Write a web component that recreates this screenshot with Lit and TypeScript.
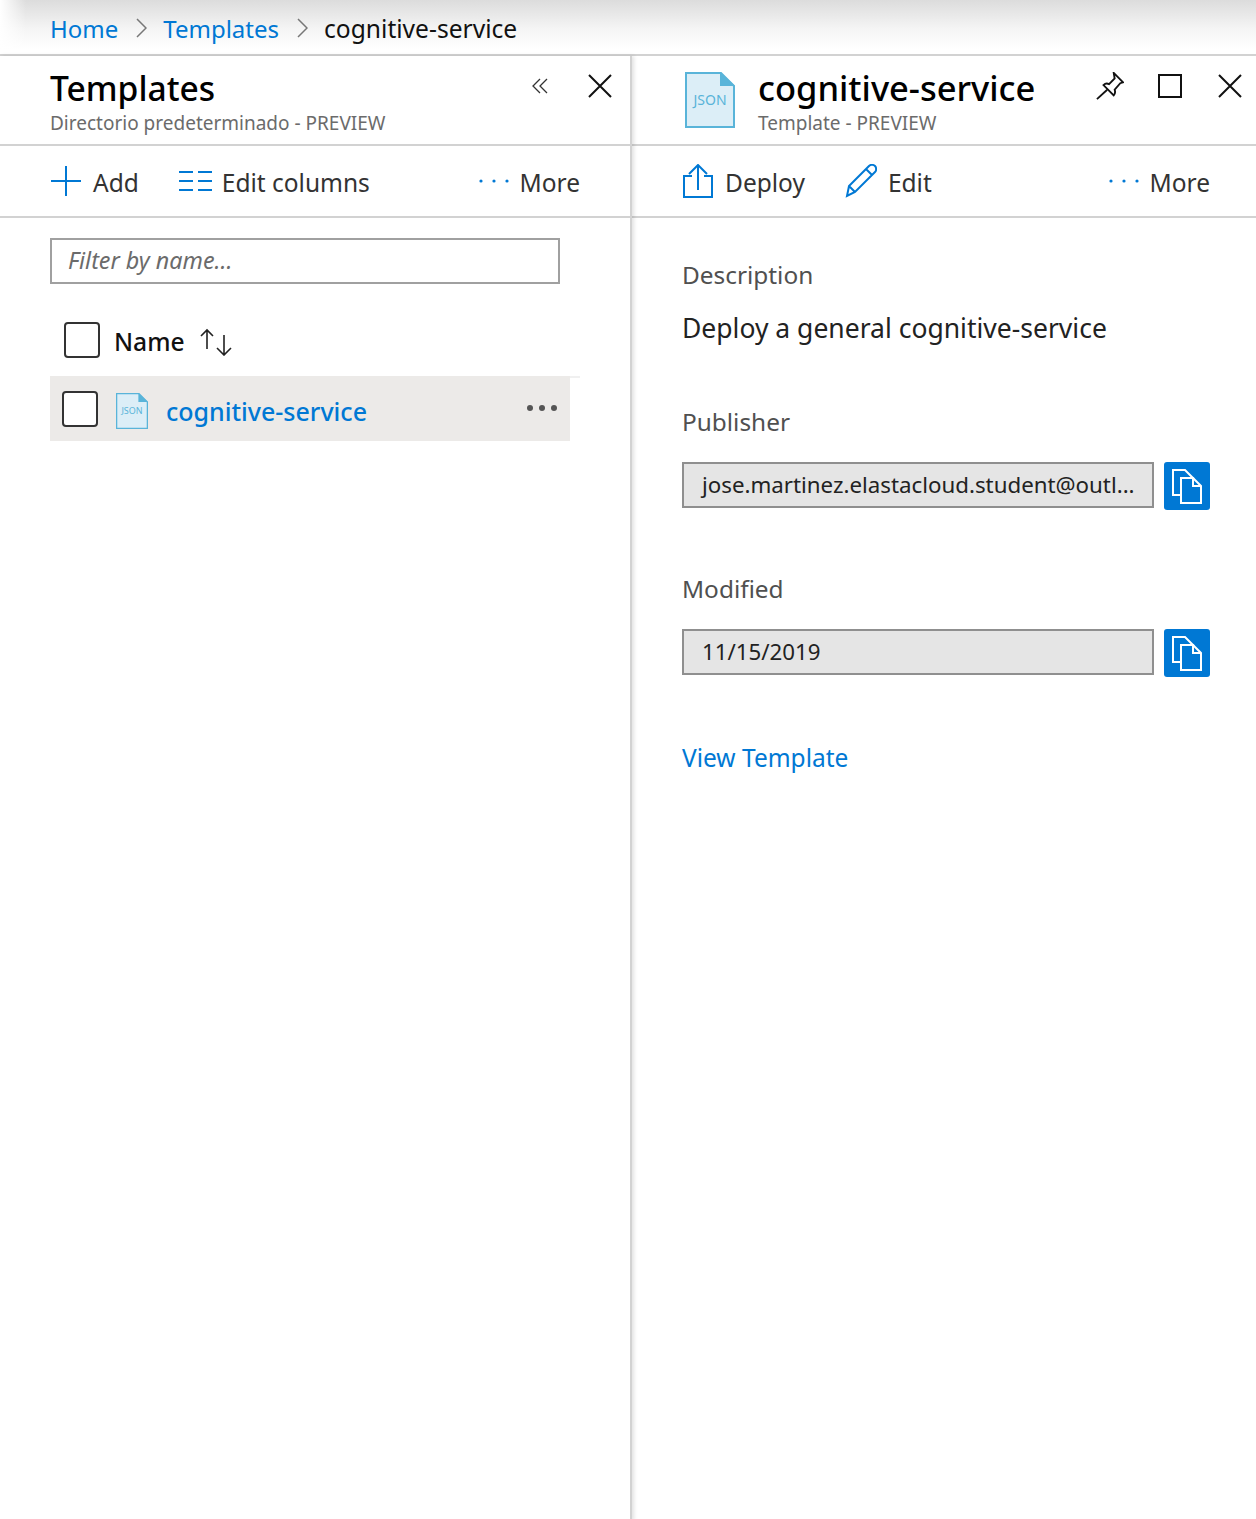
import { LitElement, html, css, svg } from 'lit';
import { customElement } from 'lit/decorators.js';

const jsonIcon = (w: number, h: number) => html`
  <svg width=${w} height=${h} viewBox="0 0 50 56">
    <path d="M1 1h35l13 13v41H1z" fill="#dceef7" stroke="#59b4d9" stroke-width="2"/>
    <path d="M35 0l15 14H35z" fill="#59b4d9"/>
    <text x="25" y="33" text-anchor="middle" font-family="Noto Sans, sans-serif" font-size="14" fill="#59b4d9">JSON</text>
  </svg>`;

const closeIcon = svg`<path d="M1 1l22 22M23 1L1 23" fill="none" stroke="#111" stroke-width="2"/>`;

const moreDots = html`
  <svg width="30" height="6" viewBox="0 0 30 6">
    <circle cx="2" cy="3" r="1.6" fill="#0078d4"/><circle cx="15" cy="3" r="1.6" fill="#0078d4"/><circle cx="28" cy="3" r="1.6" fill="#0078d4"/>
  </svg>`;

const copyIcon = html`
  <svg width="32" height="36" viewBox="0 0 32 36" fill="none" stroke="#fff" stroke-width="2">
    <path d="M15 27H2V2h12l9 9"/>
    <path d="M10 10h12l8 8v17H10z" fill="#0078d4"/>
    <path d="M22 10v8h8"/>
  </svg>`;

const chevron = html`
  <svg width="11" height="20" viewBox="0 0 11 20"><path d="M1 1l9 9-9 9" fill="none" stroke="#777" stroke-width="1.5"/></svg>`;

@customElement('app-root')
export class AppRoot extends LitElement {
  static styles = css`
    :host {
      display: block;
      width: 1256px;
      height: 1519px;
      overflow: hidden;
      background: #fff;
      color: #111;
      font-family: "Noto Sans", sans-serif;
      font-size: 26px;
    }
    a { color: #0078d4; text-decoration: none; }
    svg { display: block; flex: none; }

    .crumbs {
      height: 54px;
      box-sizing: border-box;
      padding: 2px 0 0 50px;
      display: flex;
      align-items: center;
      background:
        linear-gradient(90deg, #fff, rgba(255, 255, 255, 0) 26px),
        linear-gradient(#dcdcdc, #f4f4f4 28px, #fff 50px);
      font-size: 24px;
    }
    .crumbs svg { margin: 0 16px 0 18px; }
    .crumbs span { font-size: 24.6px; }
    .panels {
      display: grid;
      grid-template-columns: 632px 624px;
      height: 1465px;
      border-top: 2px solid #d2d2d2;
    }
    .left {
      box-shadow: 2px 0 4px rgba(0, 0, 0, 0.12);
      border-right: 2px solid #d2d2d2;
      z-index: 1;
      box-sizing: border-box;
    }

    .head {
      height: 88px;
      display: flex;
      border-bottom: 2px solid #d2d2d2;
      padding-left: 50px;
    }
    .right .head { padding-left: 0; }
    .titles { flex: 1; padding-top: 10px; }
    .title { font-size: 34.5px; line-height: 44px; font-weight: 500; color: #000; }
    .left .title { font-size: 33.6px; }
    .sub { font-size: 19px; line-height: 24px; color: #6b6b6b; margin-top: 1px; }
    .head-icons { display: flex; align-items: flex-start; padding-top: 18px; }
    .left .head-icons { gap: 40px; padding-right: 18px; }
    .right .head-icons { gap: 36px; padding-right: 14px; }
    .chev { margin-top: 4px; }
    .pin { margin: -2px -2px 0 0; }

    .toolbar {
      height: 70px;
      display: flex;
      align-items: center;
      border-bottom: 2px solid #d2d2d2;
      padding: 0 50px 0 51px;
      color: #333;
      font-size: 24.5px;
    }
    .tool { display: flex; align-items: center; gap: 12px; margin-right: 40px; }
    .tool span { margin-top: 2px; }
    .tool.tight { gap: 10px; }
    .tool.medium { gap: 11px; }
    .tool.more { margin: 0 0 0 auto; gap: 11px; }
    .right .tool.more { margin-right: -4px; }

    .filter {
      margin: 20px 0 0 50px;
      width: 510px;
      height: 46px;
      box-sizing: border-box;
      border: 2px solid #a0a0a0;
      padding-left: 16px;
      font-style: italic;
      font-size: 23.3px;
      line-height: 40px;
      color: #6b6b6b;
    }
    .grid-head {
      display: flex;
      align-items: center;
      height: 92px;
      padding: 20px 0 0 64px;
      box-sizing: border-box;
      color: #111;
      font-size: 24.6px;
      font-weight: 500;
    }
    .check {
      width: 36px;
      height: 36px;
      box-sizing: border-box;
      border: 2px solid #333;
      border-radius: 4px;
      background: #fff;
      flex: none;
    }
    .grid-head span { margin: 2px 14px 0 14px; }
    .grid-head svg { margin-top: 4px; }
    .row {
      width: 520px;
      height: 65px;
      margin-left: 50px;
      background: #eceae8;
      display: flex;
      align-items: center;
      padding-left: 12px;
      box-sizing: border-box;
      position: relative;
    }
    .row::after {
      content: "";
      position: absolute;
      left: 0;
      right: -10px;
      top: 0;
      height: 2px;
      background: #f0f0f0;
      z-index: -1;
    }
    .row .file { margin: 4px 0 0 18px; }
    .row a { margin-left: 18px; font-size: 25px; font-weight: 500; margin-top: 4px; }
    .dots { margin-left: auto; margin-right: 12px; margin-top: -2px; }

    .file-big { margin: 15px 0 0 53px; }
    .right .titles { padding-left: 23px; }

    .details { padding: 40px 46px 0 50px; }
    .label { color: #505050; font-size: 24.4px; line-height: 34px; }
    .desc { margin-top: 19px; font-size: 26.5px; line-height: 34px; color: #222; }
    .field-label { margin-top: 62px; }
    .desc + .field-label { margin-top: 60px; }
    .field { display: flex; gap: 10px; margin-top: 23px; }
    .input {
      flex: 1;
      min-width: 0;
      height: 46px;
      box-sizing: border-box;
      border: 2px solid #8f8f8f;
      background: #e5e5e5;
      padding-left: 18px;
      font-size: 22.3px;
      line-height: 42px;
      color: #222;
      white-space: nowrap;
    }
    .copy {
      width: 46px;
      height: 48px;
      flex: none;
      background: #0078d4;
      border-radius: 3px;
      display: flex;
      align-items: center;
      justify-content: center;
    }
    .view { display: block; margin-top: 64px; font-size: 24.5px; line-height: 34px; }
  `;

  render() {
    return html`
      <div class="crumbs">
        <a href="#">Home</a>
        ${chevron}
        <a href="#">Templates</a>
        ${chevron}
        <span>cognitive-service</span>
      </div>
      <div class="panels">
        <section class="left">
          <div class="head">
            <div class="titles">
              <div class="title">Templates</div>
              <div class="sub">Directorio predeterminado - PREVIEW</div>
            </div>
            <div class="head-icons">
              <svg class="chev" width="16" height="16" viewBox="0 0 16 16"><path d="M8 1L1 8l7 7M15 1L8 8l7 7" fill="none" stroke="#333" stroke-width="1.3"/></svg>
              <svg width="24" height="24" viewBox="0 0 24 24">${closeIcon}</svg>
            </div>
          </div>
          <div class="toolbar">
            <div class="tool">
              <svg width="30" height="30" viewBox="0 0 30 30"><path d="M15 0v30M0 15h30" stroke="#0078d4" stroke-width="2"/></svg>
              <span>Add</span>
            </div>
            <div class="tool tight">
              <svg width="33" height="20" viewBox="0 0 33 20"><path d="M0 1h14M0 10h14M0 19h14M19 1h14M19 10h14M19 19h14" stroke="#0078d4" stroke-width="2"/></svg>
              <span>Edit columns</span>
            </div>
            <div class="tool more">${moreDots} <span>More</span></div>
          </div>
          <div class="filter">Filter by name...</div>
          <div class="grid-head">
            <div class="check"></div>
            <span>Name</span>
            <svg width="34" height="28" viewBox="0 0 34 28" fill="none" stroke="#222" stroke-width="1.6">
              <path d="M8 21V2M2 8l6-6 6 6M25 7v20M18 20l7 7 7-7"/>
            </svg>
          </div>
          <div class="row">
            <div class="check"></div>
            <div class="file">${jsonIcon(32, 36)}</div>
            <a href="#">cognitive-service</a>
            <svg class="dots" width="32" height="8" viewBox="0 0 32 8">
              <circle cx="4" cy="4" r="3" fill="#555"/><circle cx="16" cy="4" r="3" fill="#555"/><circle cx="28" cy="4" r="3" fill="#555"/>
            </svg>
          </div>
        </section>
        <section class="right">
          <div class="head">
            <div class="file-big">${jsonIcon(50, 58)}</div>
            <div class="titles">
              <div class="title">cognitive-service</div>
              <div class="sub">Template - PREVIEW</div>
            </div>
            <div class="head-icons">
              <svg class="pin" width="28" height="28" viewBox="0 0 30 30" fill="none" stroke="#111" stroke-width="2">
                <path d="M19 1l10 10-3 1-6 7c1 3 0 5-1 6L8 14c2-2 4-2 6-1l6-6z"/>
                <path d="M12 19L1 29"/>
              </svg>
              <svg width="24" height="24" viewBox="0 0 24 24"><rect x="1" y="1" width="22" height="22" fill="none" stroke="#111" stroke-width="2"/></svg>
              <svg width="24" height="24" viewBox="0 0 24 24">${closeIcon}</svg>
            </div>
          </div>
          <div class="toolbar">
            <div class="tool">
              <svg width="30" height="34" viewBox="0 0 30 34" fill="none" stroke="#0078d4" stroke-width="2">
                <path d="M15 26V2M6 10l9-9 9 9M9 12H1v21h28V12h-8"/>
              </svg>
              <span>Deploy</span>
            </div>
            <div class="tool medium">
              <svg width="32" height="34" viewBox="0 0 32 34" fill="none" stroke="#0078d4" stroke-width="2">
                <path d="M2 32l2-10L24 2c2-2 5-1 6 0s2 4 0 6L10 28zM4 22l6 6M21 5l6 6"/>
              </svg>
              <span>Edit</span>
            </div>
            <div class="tool more">${moreDots} <span>More</span></div>
          </div>
          <div class="details">
            <div class="label">Description</div>
            <div class="desc">Deploy a general cognitive-service</div>
            <div class="label field-label">Publisher</div>
            <div class="field">
              <div class="input">jose.martinez.elastacloud.student@outl...</div>
              <div class="copy">${copyIcon}</div>
            </div>
            <div class="label field-label">Modified</div>
            <div class="field">
              <div class="input">11/15/2019</div>
              <div class="copy">${copyIcon}</div>
            </div>
            <a class="view" href="#">View Template</a>
          </div>
        </section>
      </div>
    `;
  }
}
